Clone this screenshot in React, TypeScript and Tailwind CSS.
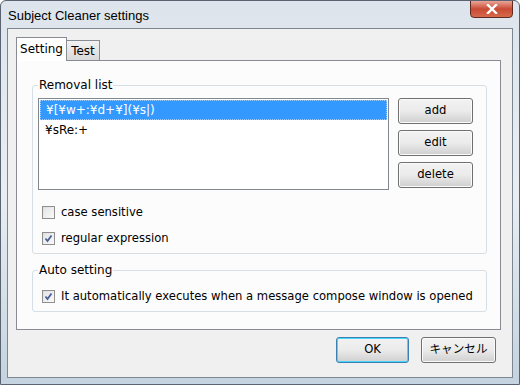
import { useState } from "react";

function Check({ checked }: { checked: boolean }) {
  return (
    <span className="w-[13px] h-[13px] border border-[#8f8f8f] bg-gradient-to-br from-[#dcdcdc] to-[#fbfbfb] flex items-center justify-center shrink-0">
      <span className="w-[9px] h-[9px] bg-gradient-to-br from-[#e6e6e6] to-[#f7f7f7] flex items-center justify-center">
        {checked && (
          <svg width="9" height="9" viewBox="0 0 9 9">
            <path d="M1.5 4.5 L3.5 7 L7.5 1.5" fill="none" stroke="#4a5f97" strokeWidth="1.8" />
          </svg>
        )}
      </span>
    </span>
  );
}

function Button({ label, primary }: { label: string; primary?: boolean }) {
  return (
    <button
      className={`h-[26px] rounded-[3px] border text-[11.6px] text-black bg-gradient-to-b from-[#f2f2f2] via-[#ebebeb] to-[#cfcfcf] ${
        primary ? "border-[#3c7fb1] shadow-[inset_0_0_0_1px_#48d7fb]" : "border-[#707070] shadow-[inset_0_0_0_1px_#fbfbfb]"
      }`}
    >
      {label}
    </button>
  );
}

export default function App() {
  const [tab, setTab] = useState("setting");
  const [selected, setSelected] = useState(0);
  const items = ["¥[¥w+:¥d+¥](¥s|)", "¥sRe:+"];

  return (
    <div
      className="w-[520px] h-[385px] flex flex-col bg-gradient-to-b from-[#dde4ec] via-[#e9eef3] to-[#c4d3df] border border-[#5a6470] rounded-t-[6px] overflow-hidden text-black"
      style={{ fontFamily: '"DejaVu Sans", "Noto Sans CJK JP", sans-serif' }}
    >
      {/* Title bar */}
      <div className="h-[27px] flex items-start justify-between pl-[7px] pr-[6px]">
        <span
          className="mt-[5px] text-[13px] text-black"
          style={{ fontFamily: '"Liberation Sans", sans-serif' }}
        >
          Subject Cleaner settings
        </span>
        <div className="w-[43px] h-[18px] -mt-px rounded-b-[4px] border border-[#5e2a22] bg-gradient-to-b from-[#e8a497] via-[#c94a34] to-[#d56a4c] flex items-center justify-center">
          <svg width="12" height="10" viewBox="0 0 12 10">
            <path d="M2 1 L10 9 M10 1 L2 9" stroke="#fff" strokeWidth="2.4" strokeLinecap="square" />
          </svg>
        </div>
      </div>

      {/* Client area */}
      <div className="mx-[6px] h-[350px] border border-[#7d8792] bg-[#f0f0f0] flex flex-col text-[11.6px]">
        {/* Tabs */}
        <div className="flex items-end pl-[8px] pt-[7px] h-[31px]">
          <button
            onClick={() => setTab("setting")}
            className={`w-[51px] text-[12px] border border-[#898c95] border-b-0 ${
              tab === "setting" ? "h-[24px] bg-white relative z-10 -mb-px pb-px" : "h-[20px] bg-gradient-to-b from-[#f2f2f2] to-[#d9d9d9]"
            }`}
          >
            Setting
          </button>
          <button
            onClick={() => setTab("test")}
            className={`w-[33px] text-[12px] border border-[#898c95] border-b-0 border-l-0 ${
              tab === "test" ? "h-[24px] bg-white relative z-10 -mb-px pb-px" : "h-[20px] bg-gradient-to-b from-[#f2f2f2] to-[#d9d9d9]"
            }`}
          >
            Test
          </button>
        </div>

        {/* Panel */}
        <div className="ml-[8px] w-[485px] h-[270px] border border-[#898c95] bg-[#fcfcfc] pl-[15px] pr-[13px] pt-[17px] flex flex-col">
          <fieldset className="border border-[#d5dfe5] rounded-[3px] h-[176px] pl-[5px] pr-[13px] pb-[6px]">
            <legend className="px-px text-[12px] leading-[14px]">Removal list</legend>
            <div className="flex gap-[9px] mt-[6px]">
              <div className="w-[351px] h-[92px] border border-[#828790] bg-white p-px">
                {items.map((it, i) => (
                  <div
                    key={it}
                    onClick={() => setSelected(i)}
                    className={`h-[20px] pl-[5px] flex items-center text-[12px] ${
                      selected === i ? "bg-[#3399ff] text-white border border-dotted border-[#9fcfff]" : ""
                    }`}
                  >
                    {it}
                  </div>
                ))}
              </div>
              <div className="flex flex-col gap-[6px] w-[75px]">
                <Button label="add" />
                <Button label="edit" />
                <Button label="delete" />
              </div>
            </div>
            <div className="flex flex-col gap-[13px] mt-[16px] pl-[4px]">
              <label className="flex items-center gap-[6px] h-[13px]">
                <Check checked={false} />
                case sensitive
              </label>
              <label className="flex items-center gap-[6px] h-[13px]">
                <Check checked={true} />
                regular expression
              </label>
            </div>
          </fieldset>

          <fieldset className="mt-[9px] border border-[#d5dfe5] rounded-[3px] h-[49px] pl-[9px]">
            <legend className="-ml-[4px] px-px text-[12px] leading-[14px]">Auto setting</legend>
            <label className="flex items-center gap-[6px] mt-[11px] whitespace-nowrap">
              <Check checked={true} />
              It automatically executes when a message compose window is opened
            </label>
          </fieldset>
        </div>

        {/* Dialog buttons */}
        <div className="flex justify-end gap-[12px] pr-[16px] pt-[7px]">
          <div className="w-[73px] flex flex-col">
            <Button label="OK" primary />
          </div>
          <div className="w-[75px] flex flex-col">
            <Button label="キャンセル" />
          </div>
        </div>
      </div>
    </div>
  );
}
